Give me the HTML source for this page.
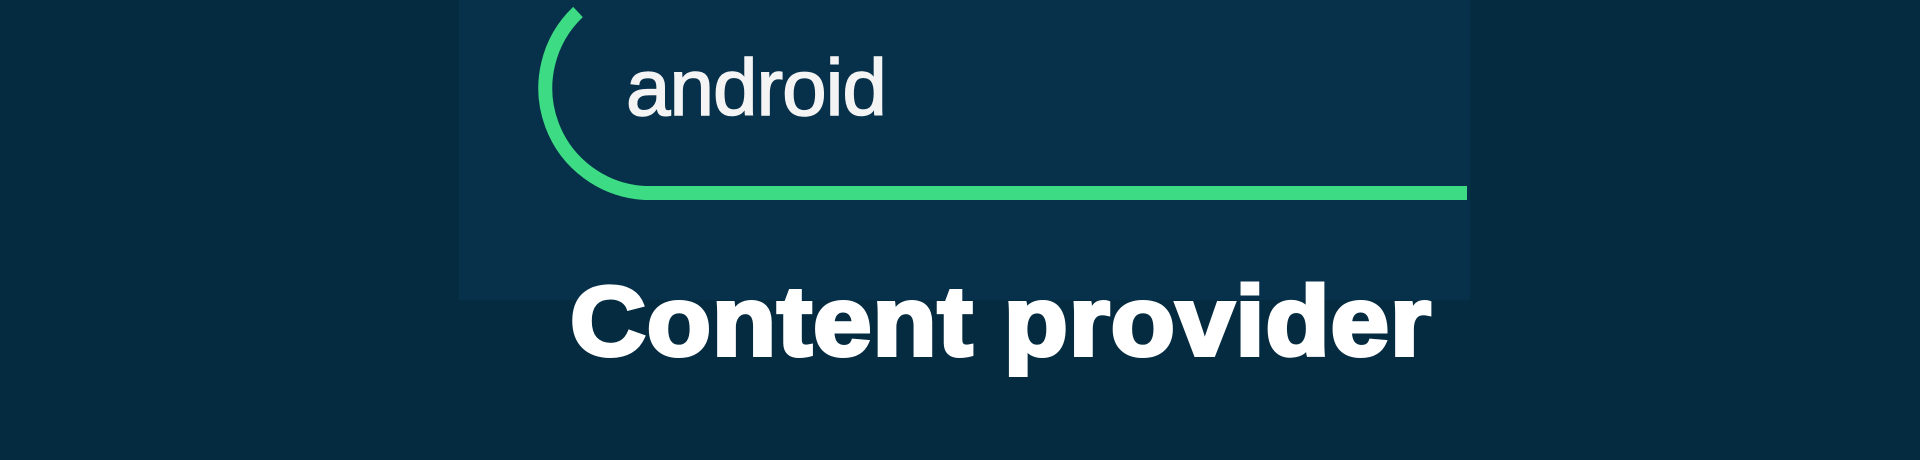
<!DOCTYPE html>
<html><head><style>
html,body{margin:0;padding:0}
body{width:1920px;height:460px;background:#052b40;position:relative;overflow:hidden;font-family:"Liberation Sans",sans-serif}
.panel{position:absolute;left:459px;top:0;width:1011px;height:300px;background:#07304a}
.and{position:absolute;left:626px;top:48px;font-size:80px;color:#f4f4f4;letter-spacing:-1px;line-height:1;-webkit-text-stroke:1.5px #f4f4f4}
.title{position:absolute;left:0;width:2002px;text-align:center;top:272px;font-size:98px;font-weight:bold;color:#fff;line-height:1;letter-spacing:1px;-webkit-text-stroke:4px #fff;transform:scaleX(1.07);transform-origin:1001px 0}
svg{position:absolute;left:0;top:0}
</style></head><body>
<div class="panel"></div>
<svg width="1920" height="460"><path d="M578 12 A105 105 0 0 0 645 193 L1467 193" fill="none" stroke="#3ddc84" stroke-width="14"/></svg>
<div class="and">android</div>
<div class="title">Content provider</div>
</body></html>
